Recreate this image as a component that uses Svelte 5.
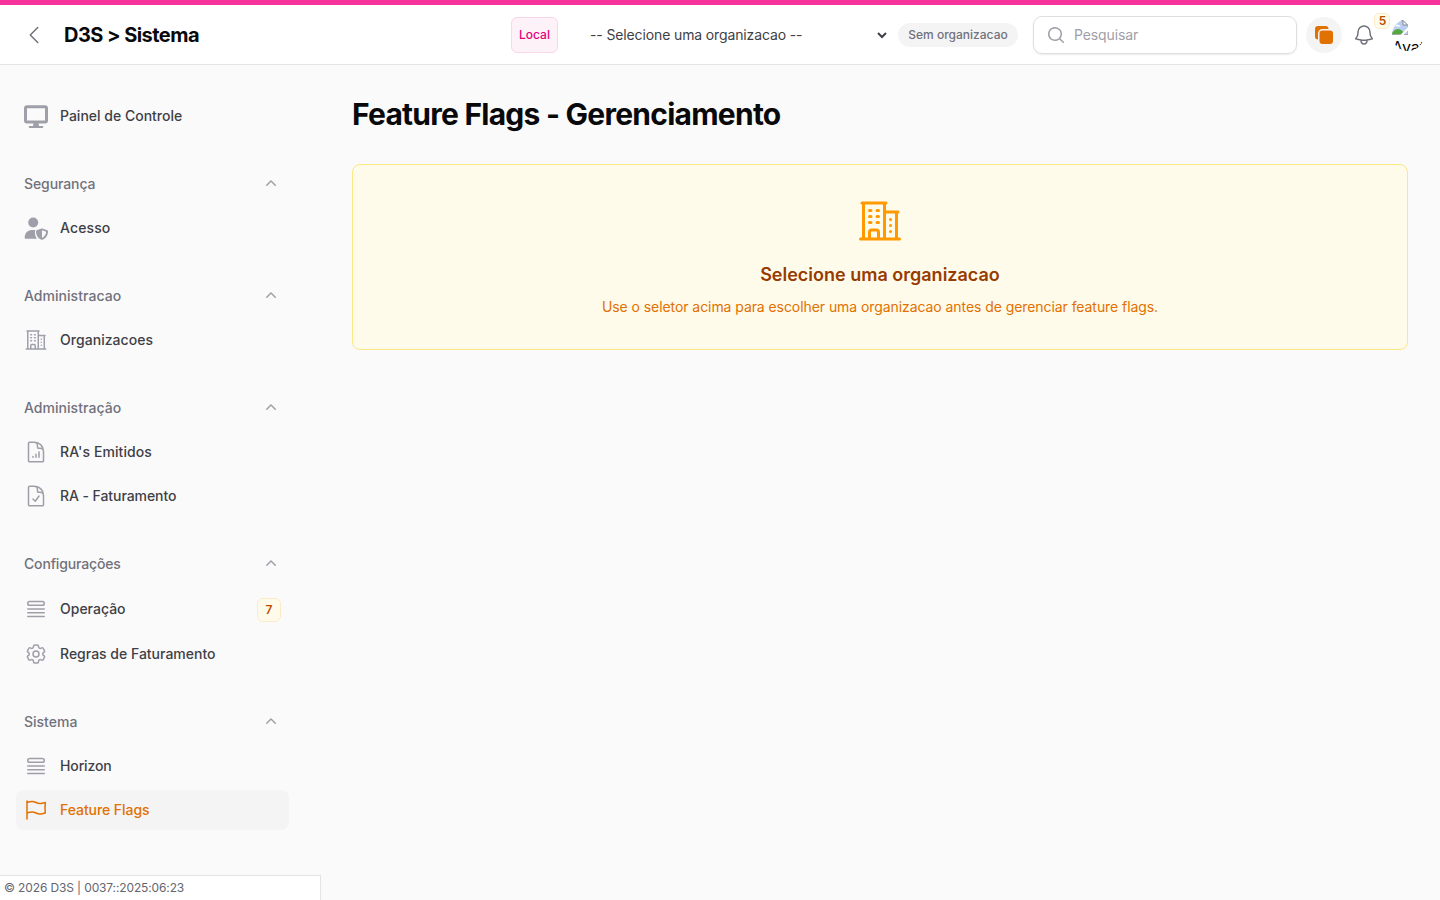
<script>
  const icons = {
    building:
      'M2.25 21h19.5m-18-18v18m10.5-18v18m6-13.5V21M6.75 6.75h.75m-.75 3h.75m-.75 3h.75m3-6h.75m-.75 3h.75m-.75 3h.75M6.75 21v-3.375c0-.621.504-1.125 1.125-1.125h2.25c.621 0 1.125.504 1.125 1.125V21M3 3h12m-.75 4.5H21m-3.75 3.75h.008v.008h-.008v-.008Zm0 3h.008v.008h-.008v-.008Zm0 3h.008v.008h-.008v-.008Z',
    chart:
      'M19.5 14.25v-2.625a3.375 3.375 0 0 0-3.375-3.375h-1.5A1.125 1.125 0 0 1 13.5 7.125v-1.5a3.375 3.375 0 0 0-3.375-3.375H8.25M9 16.5v.75m3-3v3M15 12v5.25m-4.5-15H5.625c-.621 0-1.125.504-1.125 1.125v17.25c0 .621.504 1.125 1.125 1.125h12.75c.621 0 1.125-.504 1.125-1.125V11.25a9 9 0 0 0-9-9Z',
    check:
      'M10.125 2.25h-4.5c-.621 0-1.125.504-1.125 1.125v17.25c0 .621.504 1.125 1.125 1.125h12.75c.621 0 1.125-.504 1.125-1.125v-9M10.125 2.25h.375a9 9 0 0 1 9 9v.375M10.125 2.25A3.375 3.375 0 0 1 13.5 5.625v1.5c0 .621.504 1.125 1.125 1.125h1.5a3.375 3.375 0 0 1 3.375 3.375M9 15l2.25 2.25L15 12',
    queue:
      'M3.75 12h16.5m-16.5 3.75h16.5M3.75 19.5h16.5M5.625 4.5h12.75a1.875 1.875 0 0 1 0 3.75H5.625a1.875 1.875 0 0 1 0-3.75Z',
    cog: 'M9.594 3.94c.09-.542.56-.94 1.11-.94h2.593c.55 0 1.02.398 1.11.94l.213 1.281c.063.374.313.686.645.87.074.04.147.083.22.127.325.196.72.257 1.075.124l1.217-.456a1.125 1.125 0 0 1 1.37.49l1.296 2.247a1.125 1.125 0 0 1-.26 1.431l-1.003.827c-.293.241-.438.613-.43.992a7.723 7.723 0 0 1 0 .255c-.008.378.137.75.43.991l1.004.827c.424.35.534.955.26 1.43l-1.298 2.247a1.125 1.125 0 0 1-1.369.491l-1.217-.456c-.355-.133-.75-.072-1.076.124a6.47 6.47 0 0 1-.22.128c-.331.183-.581.495-.644.869l-.213 1.281c-.09.543-.56.94-1.11.94h-2.594c-.55 0-1.019-.398-1.11-.94l-.213-1.281c-.062-.374-.312-.686-.644-.87a6.52 6.52 0 0 1-.22-.127c-.325-.196-.72-.257-1.076-.124l-1.217.456a1.125 1.125 0 0 1-1.369-.49l-1.297-2.247a1.125 1.125 0 0 1 .26-1.431l1.004-.827c.292-.24.437-.613.43-.991a6.932 6.932 0 0 1 0-.255c.007-.38-.138-.751-.43-.992l-1.004-.827a1.125 1.125 0 0 1-.26-1.43l1.297-2.247a1.125 1.125 0 0 1 1.37-.491l1.216.456c.356.133.751.072 1.076-.124.072-.044.146-.086.22-.128.332-.183.582-.495.644-.869l.214-1.28ZM15 12a3 3 0 1 1-6 0 3 3 0 0 1 6 0Z',
    flag: 'M3 3v1.5M3 21v-6m0 0 2.77-.693a9 9 0 0 1 6.208.682l.108.054a9 9 0 0 0 6.086.71l3.114-.732a48.524 48.524 0 0 1-.005-10.499l-3.11.732a9 9 0 0 1-6.085-.711l-.108-.054a9 9 0 0 0-6.208-.682L3 4.5M3 15V4.5',
    bell: 'M14.857 17.082a23.848 23.848 0 0 0 5.454-1.31A8.967 8.967 0 0 1 18 9.75V9A6 6 0 0 0 6 9v.75a8.967 8.967 0 0 1-2.312 6.022c1.733.64 3.56 1.085 5.455 1.31m5.714 0a24.255 24.255 0 0 1-5.714 0m5.714 0a3 3 0 1 1-5.714 0',
    back: 'M15.75 19.5 8.25 12l7.5-7.5'
  };

  // track: letter spacing of a label, in px
  const groups = [
    { items: [{ text: 'Painel de Controle', icon: 'desktop' }] },
    { label: 'Segurança', track: -0.1, items: [{ text: 'Acesso', icon: 'shield', track: 0.12 }] },
    { label: 'Administracao', track: 0.04, items: [{ text: 'Organizacoes', icon: 'building', track: 0.04 }] },
    {
      label: 'Administração',
      track: 0.04,
      items: [
        { text: "RA's Emitidos", icon: 'chart', track: 0.08 },
        { text: 'RA - Faturamento', icon: 'check', track: -0.07 }
      ]
    },
    {
      label: 'Configurações',
      track: -0.16,
      items: [
        { text: 'Operação', icon: 'queue', badge: '7' },
        { text: 'Regras de Faturamento', icon: 'cog' }
      ]
    },
    {
      label: 'Sistema',
      items: [
        { text: 'Horizon', icon: 'queue', track: -0.12 },
        { text: 'Feature Flags', icon: 'flag', active: true, track: -0.06 }
      ]
    }
  ];
</script>

{#snippet outline(name, size)}
  <svg width={size} height={size} viewBox="0 0 24 24" fill="none" stroke="currentColor" stroke-width="1.5" stroke-linecap="round" stroke-linejoin="round"><path d={icons[name]} /></svg>
{/snippet}

<div class="page">
  <div class="env-bar"></div>
  <header>
    <button class="back" aria-label="Voltar">{@render outline('back', 24)}</button>
    <div class="brand">D3S &gt; Sistema</div>
    <span class="env">Local</span>
    <select aria-label="Organizacao"><option>-- Selecione uma organizacao --</option></select>
    <span class="pill">Sem organizacao</span>
    <label class="search">
      <svg width="20" height="20" viewBox="0 0 20 20" fill="currentColor"><path fill-rule="evenodd" d="M9 3.5a5.5 5.5 0 1 0 0 11 5.5 5.5 0 0 0 0-11ZM2 9a7 7 0 1 1 12.452 4.391l3.328 3.329a.75.75 0 1 1-1.06 1.06l-3.329-3.328A7 7 0 0 1 2 9Z" /></svg>
      <input type="text" placeholder="Pesquisar" />
    </label>
    <button class="stack" aria-label="Painéis">
      <svg width="24" height="24" viewBox="0 0 24 24" fill="currentColor"><path d="M16.5 6a3 3 0 0 0-3-3H6a3 3 0 0 0-3 3v7.5a3 3 0 0 0 3 3v-6A4.5 4.5 0 0 1 10.5 6h6Z" /><path d="M18 7.5a3 3 0 0 1 3 3V18a3 3 0 0 1-3 3h-7.5a3 3 0 0 1-3-3v-7.5a3 3 0 0 1 3-3H18Z" /></svg>
    </button>
    <button class="bell" aria-label="Notificações">{@render outline('bell', 24)}<span class="count">5</span></button>
    <div class="avatar">
      <svg width="16" height="16" viewBox="0 0 16 16">
        <path d="M0 1h11l5 5v10H0Z" fill="#b9cdf2" />
        <path d="M0 1.500h11" stroke="#a5a5ab" />
        <path d="M11 1.500v4.500h4.500Z" fill="#fff" stroke="#85858c" />
        <path d="M3.500 7.500a1.800 1.800 0 0 1 3.200-1.200 1.600 1.600 0 0 1 2 1.200Z" fill="#fff" />
        <path d="M0 16v-2c2-2.500 4-4 6-4s4 1.500 6 4v2Z" fill="#55a83a" />
        <path d="M0 15.500h16V6" fill="none" stroke="#a5a5ab" />
        <path d="M9 17l8-8.500" stroke="#fff" stroke-width="2.200" />
      </svg>
      <span>Avatar</span>
    </div>
  </header>

  <div class="body">
    <aside>
      <nav>
        {#each groups as group}
          <section>
            {#if group.label}
              <div class="group">
                <span style:letter-spacing="{group.track ?? 0}px">{group.label}</span>
                <svg width="20" height="20" viewBox="0 0 20 20" fill="currentColor"><path d="M9.47 6.47a.75.75 0 0 1 1.06 0l4.25 4.25a.75.75 0 1 1-1.06 1.06L10 8.06l-3.72 3.72a.75.75 0 0 1-1.06-1.06l4.25-4.25Z" /></svg>
              </div>
            {/if}
            {#each group.items as item}
              <div class="item" class:active={item.active} class:badged={item.badge}>
                {#if item.icon === 'desktop'}
                  <svg width="24" height="24" viewBox="0 0 24 24" fill="currentColor"><path fill-rule="evenodd" d="M3 1.300h18a3 3 0 0 1 3 3v12.200a3 3 0 0 1-3 3h-6.500l.5 2.500h3.300a1 1 0 0 1 0 2H5.700a1 1 0 0 1 0-2H9l.5-2.500H3a3 3 0 0 1-3-3V4.300a3 3 0 0 1 3-3Zm0 3v12.200h18V4.300Z" /></svg>
                {:else if item.icon === 'shield'}
                  <svg width="24" height="24" viewBox="0 -1.700 24 24" fill="currentColor"><circle cx="9.200" cy="4.800" r="5" /><path d="M7.800 12.300h2.800c.5 0 .9 0 1.200.1-.6.400-.9.900-.9 1.600 0 3 .7 5.300 2.200 7.100H1.800A1.200 1.200 0 0 1 .6 19.900v-.4a7.200 7.200 0 0 1 7.200-7.200Z" /><path fill-rule="evenodd" d="M17.600 10.700c.2-.1.500-.1.700 0l5 1.900c.4.200.7.500.7 1 0 3.200-1.300 6.800-5.500 8.500-.3.100-.7.100-1 0-4.200-1.700-5.500-5.300-5.500-8.500 0-.5.300-.8.700-1ZM18 12.600v7.600c2.600-1.200 3.900-3.400 4.100-6.100Z" /></svg>
                {:else}
                  {@render outline(item.icon, 24)}
                {/if}
                <span class="text" style:letter-spacing="{item.track ?? 0}px">{item.text}</span>
                {#if item.badge}<span class="badge">{item.badge}</span>{/if}
              </div>
            {/each}
          </section>
        {/each}
      </nav>
      <footer>© 2026 D3S | 0037::2025:06:23</footer>
    </aside>

    <main>
      <h1>Feature Flags - Gerenciamento</h1>
      <div class="notice">
        {@render outline('building', 48)}
        <h2>Selecione uma organizacao</h2>
        <p>Use o seletor acima para escolher uma organizacao antes de gerenciar feature flags.</p>
      </div>
    </main>
  </div>
</div>

<style>
  :global(body) {
    margin: 0;
    background: #fafafa;
  }
  .page {
    display: flex;
    flex-direction: column;
    height: 900px;
    overflow: hidden;
    font-family: Inter, sans-serif;
    font-size: 14px;
    line-height: 20px;
    color: #09090b;
  }
  .page :global(*) {
    box-sizing: border-box;
  }
  svg {
    display: block;
    flex: none;
  }
  button {
    padding: 0;
    border: 0;
    background: none;
    font: inherit;
  }
  .env-bar {
    height: 5px;
    background: #f6339a;
    flex: none;
  }
  header {
    display: flex;
    align-items: center;
    height: 60px;
    flex: none;
    padding: 0 16px 0 22px;
    background: #fff;
    border-bottom: 1px solid #e4e4e7;
  }
  .back {
    color: #71717b;
  }
  .brand {
    width: 447px;
    margin-left: 18px;
    font-size: 20px;
    font-weight: 700;
    letter-spacing: -0.55px;
  }
  .env {
    width: 47px;
    height: 36px;
    display: grid;
    place-items: center;
    border: 1px solid #fbd5e8;
    border-radius: 6px;
    background: #fdf2f8;
    color: #e60076;
    font-size: 12px;
    font-weight: 500;
  }
  select {
    width: 312px;
    height: 36px;
    margin-left: 20px;
    padding: 0 0 0 8px;
    border: 0;
    background: transparent;
    color: #3f3f46;
    font: 400 14px/20px Inter, sans-serif;
    letter-spacing: -0.13px;
  }
  .pill {
    margin-left: 8px;
    width: 120px;
    height: 24px;
    border-radius: 12px;
    background: #f4f4f5;
    color: #71717b;
    font-size: 12px;
    font-weight: 500;
    line-height: 24px;
    text-align: center;
  }
  .search {
    display: flex;
    align-items: center;
    gap: 8px;
    width: 264px;
    height: 38px;
    margin-left: 15px;
    padding: 0 12px;
    border: 1px solid #dedee0;
    border-radius: 9px;
    box-shadow: 0 1px 2px rgba(0, 0, 0, 0.08);
    color: #9f9fa9;
  }
  .search input {
    min-width: 0;
    flex: 1;
    border: 0;
    padding: 0;
    outline: 0;
    background: none;
    font: inherit;
    letter-spacing: -0.1px;
  }
  .search input::placeholder {
    color: #9f9fa9;
  }
  .stack {
    display: grid;
    place-items: center;
    width: 36px;
    height: 36px;
    margin-left: 9px;
    border-radius: 50%;
    background: #f4f4f5;
    color: #e17100;
  }
  .bell {
    position: relative;
    margin-left: 10px;
    color: #71717b;
  }
  .count {
    position: absolute;
    left: 22px;
    top: -10px;
    width: 16px;
    height: 16px;
    padding-left: 1px;
    border: 1px solid #fdebc8;
    border-radius: 5px;
    background: #fffbeb;
    color: #bb4d00;
    font-size: 12px;
    font-weight: 600;
    line-height: 14px;
    text-align: center;
  }
  .avatar {
    width: 32px;
    height: 32px;
    margin-left: 16px;
    border-radius: 50%;
    overflow: hidden;
    font-size: 16px;
    line-height: 24px;
  }
  .avatar span {
    display: block;
  }
  .body {
    display: flex;
    flex: 1;
    min-height: 0;
  }
  aside {
    display: flex;
    flex-direction: column;
    width: 321px;
    flex: none;
  }
  nav {
    display: flex;
    flex-direction: column;
    gap: 28px;
    flex: 1;
    padding: 31px 32px 0 16px;
  }
  section {
    display: flex;
    flex-direction: column;
    gap: 4px;
  }
  .group {
    display: flex;
    align-items: center;
    justify-content: space-between;
    height: 40px;
    padding: 0 8px;
    color: #71717b;
    font-weight: 500;
  }
  .group svg {
    color: #9f9fa9;
  }
  .item {
    display: flex;
    align-items: center;
    gap: 12px;
    height: 40px;
    padding: 0 8px;
    border-radius: 8px;
    color: #3f3f46;
    font-weight: 500;
  }
  .item.badged {
    height: 42px;
  }
  .item :global(svg) {
    flex: none;
    color: #9f9fa9;
  }
  .item.active {
    background: #f4f4f5;
    color: #e17100;
  }
  .item.active :global(svg) {
    color: #e17100;
  }
  .text {
    flex: 1;
  }
  .badge {
    width: 24px;
    height: 24px;
    margin-top: 2px;
    border: 1px solid #fdebc8;
    border-radius: 6px;
    background: #fffbeb;
    color: #bb4d00;
    font-size: 12px;
    font-weight: 600;
    line-height: 22px;
    text-align: center;
  }
  footer {
    height: 25px;
    padding: 0 4px;
    border: solid #e4e4e7;
    border-width: 1px 1px 0 0;
    background: #fff;
    color: #65656e;
    font-size: 12px;
    line-height: 24px;
    letter-spacing: -0.13px;
  }
  main {
    flex: 1;
    padding: 31px 32px 0 31px;
  }
  h1 {
    margin: 0;
    font-size: 30px;
    font-weight: 700;
    line-height: 36px;
    letter-spacing: -0.75px;
  }
  .notice {
    display: flex;
    flex-direction: column;
    align-items: center;
    height: 186px;
    margin-top: 32px;
    padding-top: 32px;
    border: 1px solid #fee685;
    border-radius: 8px;
    background: #fffbeb;
    color: #fe9a00;
  }
  h2 {
    margin: 16px 0 0;
    color: #973c00;
    font-size: 18px;
    font-weight: 600;
    line-height: 28px;
  }
  p {
    margin: 8px 0 0;
    color: #e17100;
    letter-spacing: -0.07px;
  }
</style>
